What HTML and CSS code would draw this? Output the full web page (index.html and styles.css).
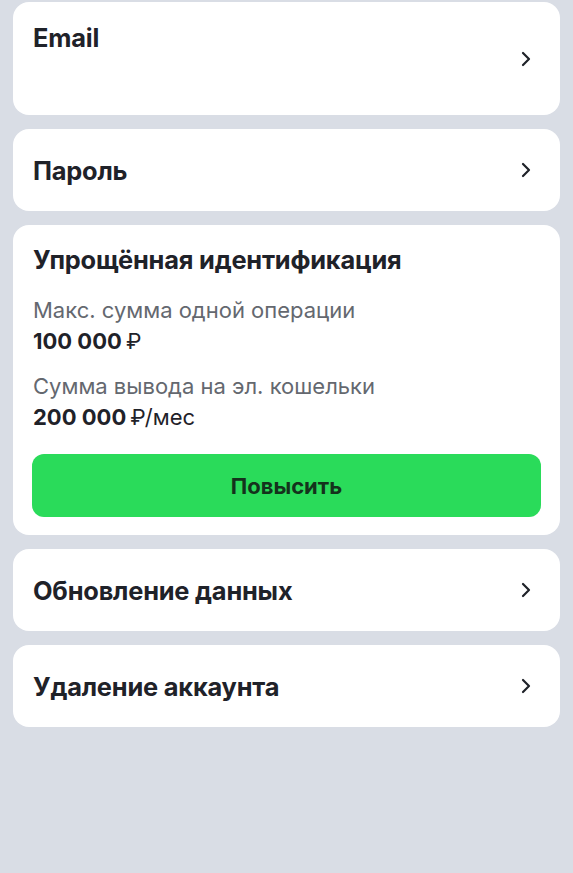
FILE: index.html
```html
<!DOCTYPE html>
<html lang="ru">
<head>
<meta charset="utf-8">
<link rel="stylesheet" href="styles.css">
</head>
<body>
<div class="list">
  <div class="card card-email">
    <div class="title">Email</div>
    <svg class="chev" viewBox="0 0 12 16" width="12" height="16"><path d="M3 2 L9 8 L3 14" fill="none" stroke="#1f2229" stroke-width="2.2" stroke-linecap="round" stroke-linejoin="round"/></svg>
  </div>
  <div class="card row">
    <div class="title">Пароль</div>
    <svg class="chev" viewBox="0 0 12 16" width="12" height="16"><path d="M3 2 L9 8 L3 14" fill="none" stroke="#1f2229" stroke-width="2.2" stroke-linecap="round" stroke-linejoin="round"/></svg>
  </div>
  <div class="card ident">
    <div class="title">Упрощённая идентификация</div>
    <div class="limit">
      <div class="label">Макс. сумма одной операции</div>
      <div class="value">100 000<span class="unit cur">₽</span></div>
    </div>
    <div class="limit">
      <div class="label">Сумма вывода на эл. кошельки</div>
      <div class="value">200 000<span class="unit cur">₽</span><span class="unit">/мес</span></div>
    </div>
    <div class="btn">Повысить</div>
  </div>
  <div class="card row">
    <div class="title">Обновление данных</div>
    <svg class="chev" viewBox="0 0 12 16" width="12" height="16"><path d="M3 2 L9 8 L3 14" fill="none" stroke="#1f2229" stroke-width="2.2" stroke-linecap="round" stroke-linejoin="round"/></svg>
  </div>
  <div class="card row">
    <div class="title">Удаление аккаунта</div>
    <svg class="chev" viewBox="0 0 12 16" width="12" height="16"><path d="M3 2 L9 8 L3 14" fill="none" stroke="#1f2229" stroke-width="2.2" stroke-linecap="round" stroke-linejoin="round"/></svg>
  </div>
</div>
</body>
</html>
```
FILE: styles.css
```css
html, body {
  margin: 0;
  padding: 0;
  background: #d9dde5;
  height: 100%;
}
body {
  font-family: Inter, "Noto Sans", sans-serif;
  color: #1f2229;
}
.list {
  display: flex;
  flex-direction: column;
  gap: 14px;
  padding: 2px 13px 0 13px;
}
.card {
  background: #fff;
  border-radius: 16px;
  padding: 0 20px;
  box-sizing: border-box;
}
.title {
  font-size: 25.4px;
  font-weight: 700;
  line-height: 30px;
  letter-spacing: -0.2px;
}
.row {
  height: 82px;
  display: flex;
  align-items: center;
  justify-content: space-between;
}
.row .title {
  margin-top: 2px;
}
.chev {
  margin-right: 8px;
  flex: none;
}
.card-email {
  height: 113px;
  display: flex;
  justify-content: space-between;
  align-items: center;
}
.card-email .title {
  align-self: flex-start;
  margin-top: 21px;
}
.ident {
  padding: 20px 19px 18px 19px;
  display: flex;
  flex-direction: column;
}
.ident .title {
  margin-left: 1px;
  margin-bottom: 20px;
}
.limit {
  margin-left: 1px;
  margin-bottom: 14px;
}
.label {
  font-size: 22px;
  line-height: 31px;
  color: #64686f;
}
.value {
  font-size: 22px;
  line-height: 31px;
  font-weight: 700;
}
.unit {
  font-weight: 400;
}
.cur {
  margin-left: 4px;
}
.btn {
  margin-top: 7px;
  height: 63px;
  border-radius: 12px;
  background: #2adb5a;
  color: #14321c;
  font-size: 22px;
  font-weight: 700;
  display: flex;
  align-items: center;
  justify-content: center;
}
```
